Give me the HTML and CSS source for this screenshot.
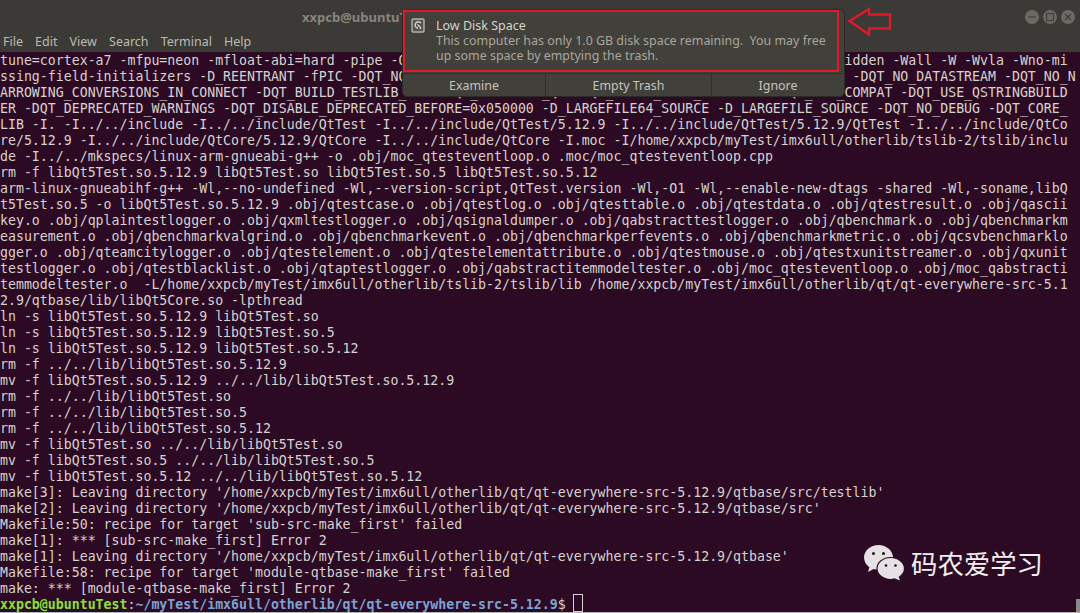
FILE: index.html
```html
<!DOCTYPE html>
<html lang="en">
<head>
<meta charset="utf-8">
<title>xxpcb@ubuntuTest</title>
<link rel="stylesheet" href="styles.css">
</head>
<body>
<div class="window">
  <header class="titlebar">
    <span class="title">xxpcb@ubuntuTest: ~/myTest/imx6ull/otherlib/qt/qt-everywhere-src-5.12.9</span>
    <div class="controls">
      <span class="ctl"><svg width="14" height="14" viewBox="0 0 14 14"><path d="M3.5 7h7" class="glyph"/></svg></span>
      <span class="ctl"><svg width="14" height="14" viewBox="0 0 14 14"><rect x="3.5" y="3.5" width="7" height="7" class="glyph"/></svg></span>
      <span class="ctl"><svg width="14" height="14" viewBox="0 0 14 14"><path d="M4 4l6 6M10 4l-6 6" class="glyph"/></svg></span>
    </div>
  </header>
  <nav class="menubar">
    <span>File</span><span>Edit</span><span>View</span><span>Search</span><span>Terminal</span><span>Help</span>
  </nav>
  <main class="terminal">
<pre class="output">tune=cortex-a7 -mfpu=neon -mfloat-abi=hard -pipe -O2 -std=c++11 -fvisibility=hidden -fvisibility-inlines-hidden -Wall -W -Wvla -Wno-mi
ssing-field-initializers -D_REENTRANT -fPIC -DQT_NO_LINKED_LIST -DQT_NO_JAVA_STYLE_ITERATORS -DQT_NO_DEBUG -DQT_NO_DATASTREAM -DQT_NO_N
ARROWING_CONVERSIONS_IN_CONNECT -DQT_BUILD_TESTLIB_LIB -DQT_BUILDING_QT -DQT_ASCII_CAST_WARNINGS -DQT_MOC_COMPAT -DQT_USE_QSTRINGBUILD
ER -DQT_DEPRECATED_WARNINGS -DQT_DISABLE_DEPRECATED_BEFORE=0x050000 -D_LARGEFILE64_SOURCE -D_LARGEFILE_SOURCE -DQT_NO_DEBUG -DQT_CORE_
LIB -I. -I../../include -I../../include/QtTest -I../../include/QtTest/5.12.9 -I../../include/QtTest/5.12.9/QtTest -I../../include/QtCo
re/5.12.9 -I../../include/QtCore/5.12.9/QtCore -I../../include/QtCore -I.moc -I/home/xxpcb/myTest/imx6ull/otherlib/tslib-2/tslib/inclu
de -I../../mkspecs/linux-arm-gnueabi-g++ -o .obj/moc_qtesteventloop.o .moc/moc_qtesteventloop.cpp
rm -f libQt5Test.so.5.12.9 libQt5Test.so libQt5Test.so.5 libQt5Test.so.5.12
arm-linux-gnueabihf-g++ -Wl,--no-undefined -Wl,--version-script,QtTest.version -Wl,-O1 -Wl,--enable-new-dtags -shared -Wl,-soname,libQ
t5Test.so.5 -o libQt5Test.so.5.12.9 .obj/qtestcase.o .obj/qtestlog.o .obj/qtesttable.o .obj/qtestdata.o .obj/qtestresult.o .obj/qascii
key.o .obj/qplaintestlogger.o .obj/qxmltestlogger.o .obj/qsignaldumper.o .obj/qabstracttestlogger.o .obj/qbenchmark.o .obj/qbenchmarkm
easurement.o .obj/qbenchmarkvalgrind.o .obj/qbenchmarkevent.o .obj/qbenchmarkperfevents.o .obj/qbenchmarkmetric.o .obj/qcsvbenchmarklo
gger.o .obj/qteamcitylogger.o .obj/qtestelement.o .obj/qtestelementattribute.o .obj/qtestmouse.o .obj/qtestxunitstreamer.o .obj/qxunit
testlogger.o .obj/qtestblacklist.o .obj/qtaptestlogger.o .obj/qabstractitemmodeltester.o .obj/moc_qtesteventloop.o .obj/moc_qabstracti
temmodeltester.o  -L/home/xxpcb/myTest/imx6ull/otherlib/tslib-2/tslib/lib /home/xxpcb/myTest/imx6ull/otherlib/qt/qt-everywhere-src-5.1
2.9/qtbase/lib/libQt5Core.so -lpthread
ln -s libQt5Test.so.5.12.9 libQt5Test.so
ln -s libQt5Test.so.5.12.9 libQt5Test.so.5
ln -s libQt5Test.so.5.12.9 libQt5Test.so.5.12
rm -f ../../lib/libQt5Test.so.5.12.9
mv -f libQt5Test.so.5.12.9 ../../lib/libQt5Test.so.5.12.9
rm -f ../../lib/libQt5Test.so
rm -f ../../lib/libQt5Test.so.5
rm -f ../../lib/libQt5Test.so.5.12
mv -f libQt5Test.so ../../lib/libQt5Test.so
mv -f libQt5Test.so.5 ../../lib/libQt5Test.so.5
mv -f libQt5Test.so.5.12 ../../lib/libQt5Test.so.5.12
make[3]: Leaving directory '/home/xxpcb/myTest/imx6ull/otherlib/qt/qt-everywhere-src-5.12.9/qtbase/src/testlib'
make[2]: Leaving directory '/home/xxpcb/myTest/imx6ull/otherlib/qt/qt-everywhere-src-5.12.9/qtbase/src'
Makefile:50: recipe for target 'sub-src-make_first' failed
make[1]: *** [sub-src-make_first] Error 2
make[1]: Leaving directory '/home/xxpcb/myTest/imx6ull/otherlib/qt/qt-everywhere-src-5.12.9/qtbase'
Makefile:58: recipe for target 'module-qtbase-make_first' failed
make: *** [module-qtbase-make_first] Error 2
<span class="p-user">xxpcb@ubuntuTest</span>:<span class="p-path">~/myTest/imx6ull/otherlib/qt/qt-everywhere-src-5.12.9</span>$ <span class="cursor"> </span></pre>
    <div class="scroll-thumb"></div>
  </main>
  <div class="baseline"></div>

  <section class="notice">
    <div class="notice-body">
      <svg class="notice-icon" width="14" height="15" viewBox="0 0 14 15">
        <rect x="1" y="1" width="12" height="13" rx="1" class="ni-frame"/>
        <path d="M10 5.2A3.2 3.2 0 1 0 7 10.2" class="ni-disc"/>
        <path d="M6.5 6.5l3 3v1.5" class="ni-disc"/>
      </svg>
      <div class="notice-text">
        <div class="notice-title">Low Disk Space</div>
        <div class="notice-msg">This computer has only 1.0 GB disk space remaining.&nbsp; You may free up some space by emptying the trash.</div>
      </div>
    </div>
    <div class="notice-actions">
      <span class="act act-a">Examine</span><span class="act act-b">Empty Trash</span><span class="act act-c">Ignore</span>
    </div>
  </section>
  <div class="highlight"></div>
  <svg class="arrow" width="46" height="30" viewBox="0 0 46 30">
    <path d="M2.500 14 L22 2 V7.500 H43 V21.500 H22 V27.500 Z"/>
  </svg>

  <div class="watermark">
    <svg width="44" height="38" viewBox="0 0 44 38">
      <path class="wm-back" d="M15.500 1C7.500 1 1 6.600 1 13.500c0 3.900 2.100 7.400 5.400 9.700L5 28l5.600-3c1.600.5 3.200.8 4.900.8 8 0 14.500-5.500 14.500-12.300S23.500 1 15.500 1z"/>
      <circle class="wm-eye" cx="10.500" cy="9.500" r="1.500"/><circle class="wm-eye" cx="20.500" cy="9.500" r="1.500"/>
      <path class="wm-front" d="M27.500 13.500C20 13.500 14 18.500 14 24.500S20 35.500 27.500 35.500c1.400 0 2.700-.2 4-.6L38 37.500l-1.600-4.500c3.200-2 5.100-5 5.100-8.500 0-6-6.500-11-14-11z"/>
      <circle class="wm-eye" cx="23" cy="21.500" r="1.300"/><circle class="wm-eye" cx="32.500" cy="21.500" r="1.300"/>
    </svg>
    <span class="wm-text">码农爱学习</span>
  </div>
</div>
</body>
</html>
```
FILE: styles.css
```css
* { box-sizing: border-box; }
html, body { margin: 0; padding: 0; }
body { width: 1080px; height: 613px; overflow: hidden; background: #2c0a23; }

.window {
  position: relative;
  width: 1080px;
  height: 613px;
  display: flex;
  flex-direction: column;
  overflow: hidden;
  font-family: "Noto Sans", "Open Sans", sans-serif;
}

.titlebar {
  height: 33px;
  flex: none;
  display: flex;
  align-items: center;
  background: #3b3a36;
  padding: 0 5px 0 302px;
}
.title { color: #87857e; font-size: 13px; font-weight: 700; white-space: nowrap; overflow: hidden; flex: 1; }
.controls { display: flex; gap: 4px; flex: none; }
.ctl {
  width: 14px; height: 14px; border-radius: 50%;
  background: #6a6963;
  display: flex;
}
.glyph { fill: none; stroke: #3f3e3a; stroke-width: 1.2; }

.menubar {
  height: 19px;
  flex: none;
  display: flex;
  align-items: center;
  gap: 12.100px;
  padding: 0 0 2px 3px;
  background: #3b3a36;
  color: #bdbab2;
  font-size: 12.500px;
}

.terminal { position: relative; flex: 1; background: #2c0a23; min-height: 0; }
.output {
  margin: 0;
  padding-top: 1px;
  font-family: "DejaVu Sans Mono", "Liberation Mono", monospace;
  font-size: 13.240px;
  line-height: 16px;
  color: #d6d2cf;
  white-space: pre;
}
.p-user { color: #8ae234; font-weight: 700; }
.p-path { color: #7aa3d4; font-weight: 700; }
.cursor {
  display: inline-block;
  width: 10px;
  height: 18px;
  margin: -3px 0 0 -1px;
  border: 1px solid #d6d2cf;
  vertical-align: top;
}
.scroll-thumb { position: absolute; right: 0; bottom: 0; width: 4px; height: 13px; background: #8a8a88; }
.baseline { height: 1px; flex: none; background: #b5b5b3; position: relative; }

.notice {
  position: absolute;
  left: 402px; top: 9px;
  width: 443px; height: 88px;
  background: #41403b;
  border: 1px solid #2b2a27;
  border-radius: 5px;
  display: flex;
  flex-direction: column;
  overflow: hidden;
}
.notice-body { height: 63px; flex: none; display: flex; padding: 8px 8px 0 8px; gap: 11px; }
.notice-icon { flex: none; }
.ni-frame { fill: #55544e; stroke: #b5b3ab; stroke-width: 1.4; }
.ni-disc { fill: none; stroke: #d5d3cc; stroke-width: 1.4; }
.notice-title { color: #d6d3cb; font-size: 12.500px; line-height: 15px; }
.notice-msg { color: #a9a69b; font-size: 12.440px; line-height: 15px; width: 395px; }
.notice-actions { flex: 1; display: flex; border-top: 1px solid #2f2e2b; color: #c6c3bb; font-size: 12.400px; }
.act { display: flex; align-items: center; justify-content: center; }
.act-a { width: 142px; }
.act-b { width: 167px; border-left: 1px solid #2f2e2b; border-right: 1px solid #2f2e2b; }
.act-c { flex: 1; }

.highlight {
  position: absolute;
  left: 403px; top: 10px;
  width: 436px; height: 62px;
  border: 2px solid #e0192b;
  pointer-events: none;
}
.arrow { position: absolute; left: 847px; top: 7px; }
.arrow path { fill: none; stroke: #e0192b; stroke-width: 2.400; }

.watermark {
  position: absolute;
  left: 863px; top: 544px;
  display: flex;
  align-items: center;
  gap: 4px;
}
.wm-back, .wm-front { fill: #e6e1e4; }
.wm-front { stroke: #2c0a23; stroke-width: 1.200; }
.wm-eye { fill: #2c0a23; }
.wm-text {
  color: #f1eef0;
  font-family: "Noto Sans CJK SC", sans-serif;
  font-weight: 400;
  font-size: 26.400px;
  line-height: 34px;
}
```
